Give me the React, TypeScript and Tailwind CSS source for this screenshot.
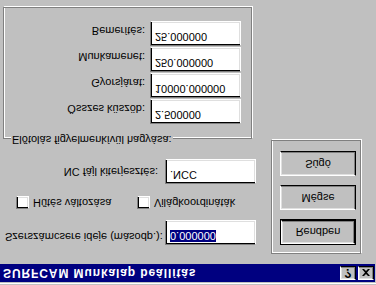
import type { ReactNode } from 'react';

const sunken =
  'border border-t-[#808080] border-l-[#808080] border-b-white border-r-white shadow-[inset_1px_1px_0_#000,inset_-1px_-1px_0_#dfdfdf]';
const raised =
  'border border-t-white border-l-white border-b-black border-r-black shadow-[inset_-1px_-1px_0_#808080,inset_1px_1px_0_#dfdfdf]';
const etched = 'border border-[#808080] shadow-[1px_1px_0_#fff,inset_1px_1px_0_#fff]';

const TextBox = ({ children }: { children: ReactNode }) => (
  <div className={`w-[91px] h-[25px] shrink-0 bg-white pl-[4px] pt-px leading-[14px] ${sunken}`}>{children}</div>
);

const CheckBox = ({ label }: { label: string }) => (
  <div className="flex items-center">
    <div className={`w-[13px] h-[13px] bg-white ${sunken}`} />
    <span className="ml-[4px] leading-[13px]">{label}</span>
  </div>
);

const Button = ({ label }: { label: string }) => (
  <div className={`w-[76px] h-[25px] flex items-center justify-center ${raised}`}>{label}</div>
);

const Field = ({ label, value }: { label: string; value: string }) => (
  <div className="flex items-start h-[25px]">
    <span className="w-[141px] text-right mt-[9px] leading-[13px]">{label}</span>
    <div className="ml-[5px]">
      <TextBox>{value}</TextBox>
    </div>
  </div>
);

export default function App() {
  return (
    <div className="w-[376px] h-[285px] overflow-hidden bg-[#c0c0c0] -scale-y-100 font-['Liberation_Sans',Arial,sans-serif] text-[11px] text-black">
      <div className="pt-px">
        <div className="border-t border-white pt-px">
          <div className="h-[18px] mr-px bg-[#000080] flex items-center justify-between pl-[3px] pr-px">
            <span className="text-white font-bold text-[12px] tracking-[0.9px] leading-none">SURFCAM Munkalap beállítás</span>
            <div className="flex gap-[2px]">
              <div className={`w-[16px] h-[14px] bg-[#c0c0c0] flex items-center justify-center font-bold text-[12px] leading-none ${raised}`}>
                ?
              </div>
              <div className={`w-[16px] h-[14px] bg-[#c0c0c0] flex items-center justify-center ${raised}`}>
                <svg width="8" height="7" viewBox="0 0 8 7">
                  <path d="M0 0h2l2 2 2-2h2l-3 3.5 3 3.5h-2l-2-2-2 2h-2l3-3.5z" fill="#000" />
                </svg>
              </div>
            </div>
          </div>
        </div>
      </div>

      <div className="flex">
        <div className="w-[257px]">
          <div className="mt-[19px] flex items-start h-[25px]">
            <span className="w-[165px] pl-[5px] mt-px leading-[14px]">Szerszámcsere ideje (másodp.):</span>
            <TextBox>
              <span className="bg-[#000080] text-white">0.000000</span>
            </TextBox>
          </div>

          <div className="mt-[11px] flex h-[13px]">
            <div className="ml-[16px] w-[121px]">
              <CheckBox label="Hűtés változása" />
            </div>
            <CheckBox label="Világkoordináták" />
          </div>

          <div className="mt-[12px] flex items-center h-[25px]">
            <span className="w-[158px] text-right">NC fájl kiterjesztés:</span>
            <div className="ml-[7px]">
              <TextBox>.NCC</TextBox>
            </div>
          </div>

          <div className={`relative mt-[20px] ml-[3px] w-[249px] h-[132px] ${etched}`}>
            <span className="absolute top-[-8px] left-[7px] px-px bg-[#c0c0c0] leading-[13px]">
              Előtolás figyelmenkívül hagyása:
            </span>
            <div className="mt-[14px] flex flex-col gap-px">
              <Field label="Összes küszöb:" value="2.500000" />
              <Field label="Gyorsjárat:" value="10000.000000" />
              <Field label="Munkamenet:" value="250.000000" />
              <Field label="Bemerítés:" value="25.000000" />
            </div>
          </div>
        </div>

        <div className={`ml-[14px] mt-[10px] w-[90px] h-[114px] pl-[8px] pt-[8px] flex flex-col gap-[9px] ${etched}`}>
          <div className="w-[76px] h-[26px] border border-black">
            <div className={`w-full h-full flex items-center justify-center ${raised}`}>Rendben</div>
          </div>
          <Button label="Mégse" />
          <Button label="Súgó" />
        </div>
      </div>
    </div>
  );
}
